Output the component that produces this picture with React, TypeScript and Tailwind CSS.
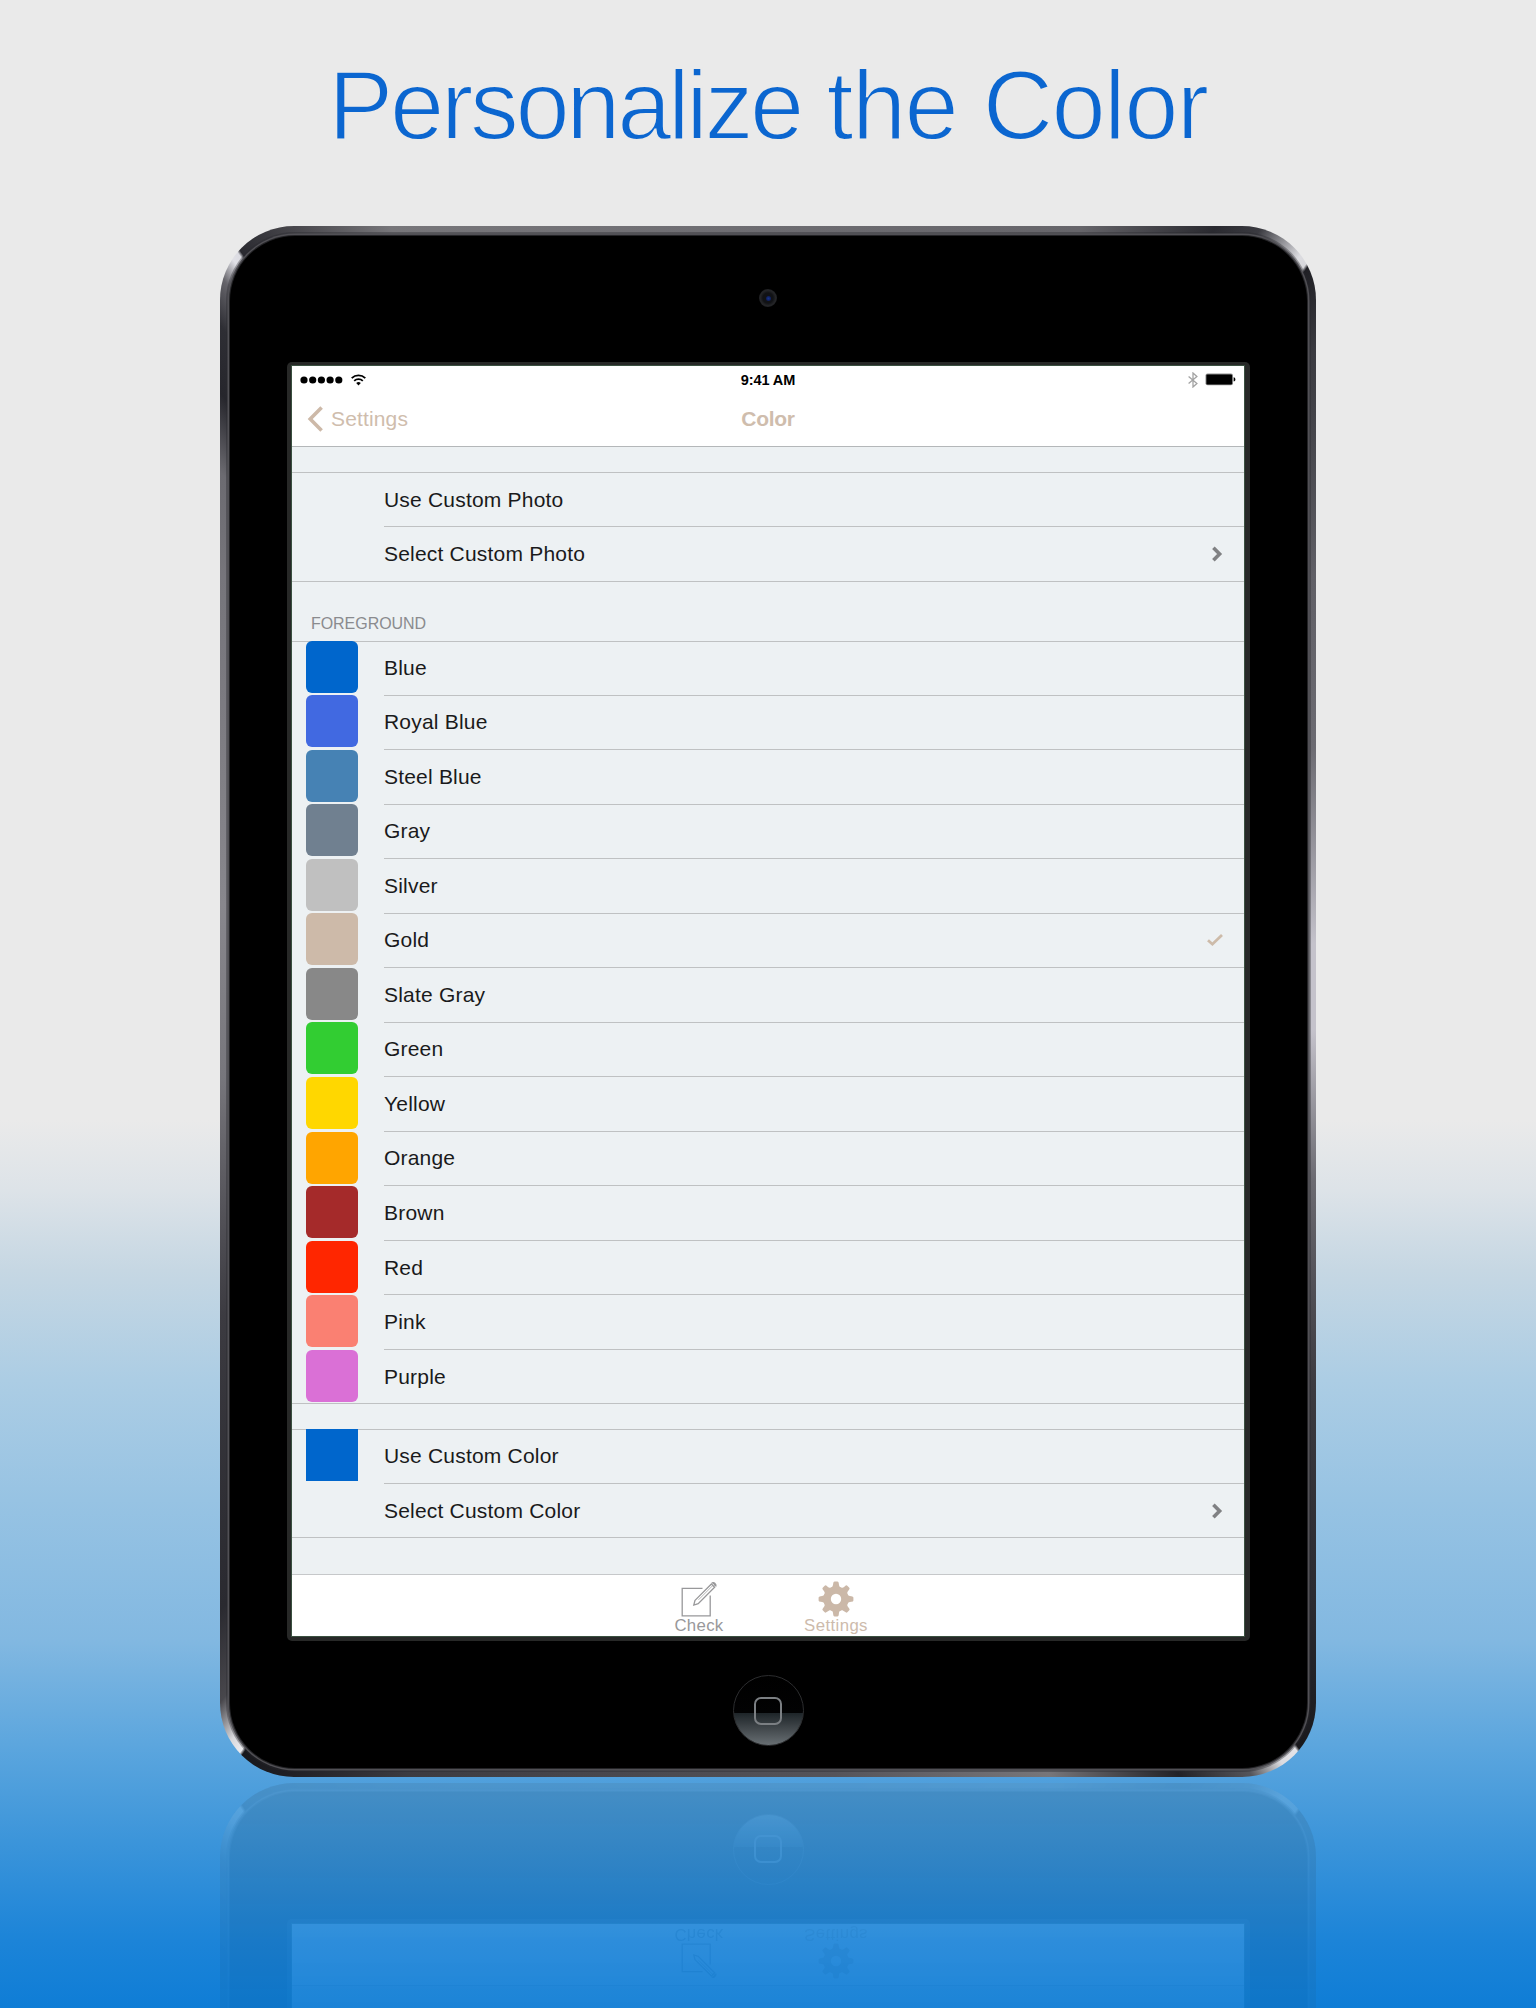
import type { ReactNode } from "react";

type Item = {
  label: string;
  swatch?: string;
  square?: boolean;
  checked?: boolean;
  chevron?: boolean;
};

const photoItems: Item[] = [
  { label: "Use Custom Photo" },
  { label: "Select Custom Photo", chevron: true },
];

const colorItems: Item[] = [
  { label: "Blue", swatch: "bg-[#0066cc]" },
  { label: "Royal Blue", swatch: "bg-[#4169e1]" },
  { label: "Steel Blue", swatch: "bg-[#4682b4]" },
  { label: "Gray", swatch: "bg-[#708090]" },
  { label: "Silver", swatch: "bg-[#c0c0c0]" },
  { label: "Gold", swatch: "bg-[#cdbaa9]", checked: true },
  { label: "Slate Gray", swatch: "bg-[#888888]" },
  { label: "Green", swatch: "bg-[#32cd32]" },
  { label: "Yellow", swatch: "bg-[#ffd700]" },
  { label: "Orange", swatch: "bg-[#ffa500]" },
  { label: "Brown", swatch: "bg-[#a52a2a]" },
  { label: "Red", swatch: "bg-[#ff2600]" },
  { label: "Pink", swatch: "bg-[#fa8072]" },
  { label: "Purple", swatch: "bg-[#da70d6]" },
];

const customItems: Item[] = [
  { label: "Use Custom Color", swatch: "bg-[#0066cc]", square: true },
  { label: "Select Custom Color", chevron: true },
];

function Row({ item, first }: { item: Item; first: boolean }) {
  return (
    <div className={first ? "flex h-[54.2px] border-t border-[#bfc1c2]" : "flex h-[54.53px]"}>
      <div className="w-[92px] shrink-0 pl-[14px]">
        {item.swatch && (
          <div
            className={`h-[52px] w-[52px] ${first ? "-mt-[0.5px]" : "mt-[0.7px]"} ${item.square ? "" : "rounded-[6px]"} ${item.swatch}`}
          />
        )}
      </div>
      <div
        className={
          first
            ? "flex flex-1 items-center justify-between pb-[1.2px] pr-[21px]"
            : "flex flex-1 items-center justify-between border-t border-[#bfc1c2] pb-[1.2px] pr-[21px]"
        }
      >
        <span className="text-[21px] leading-none tracking-[0.2px] text-[#1a1a1b]">{item.label}</span>
        {item.chevron && (
          <svg width="12" height="16" viewBox="0 0 12 16" className="mt-px" fill="none" stroke="#808183" strokeWidth="3.6">
            <path d="M2.4 1.8 8.6 8l-6.2 6.2" />
          </svg>
        )}
        {item.checked && (
          <svg width="16" height="14" viewBox="0 0 16 14" className="mt-px" fill="none" stroke="#cdbba9" strokeWidth="2.8">
            <path d="M1 7.2 5.4 11.2 15 2" />
          </svg>
        )}
      </div>
    </div>
  );
}

function Section({ items }: { items: Item[] }) {
  return (
    <div className="border-b border-[#bfc1c2]">
      {items.map((item, i) => (
        <Row key={item.label} item={item} first={i === 0} />
      ))}
    </div>
  );
}

function StatusBar() {
  return (
    <div className="grid h-[27px] grid-cols-3 items-center pl-[8px] pr-[8px] text-black">
      <div className="flex items-center gap-[8px]">
        <svg width="43" height="8" viewBox="0 0 43 8">
          <circle cx="4" cy="4" r="3.6" />
          <circle cx="12.7" cy="4" r="3.6" />
          <circle cx="21.4" cy="4" r="3.6" />
          <circle cx="30.1" cy="4" r="3.6" />
          <circle cx="38.8" cy="4" r="3.6" />
        </svg>
        <svg width="15" height="12" viewBox="0 0 15 12" fill="none" stroke="black" strokeWidth="1.8">
          <path d="M.7 4.1a9.8 9.8 0 0 1 13.6 0" />
          <path d="M3.2 6.8a6.3 6.3 0 0 1 8.6 0" />
          <path d="M5.2 9a3.4 3.4 0 0 1 4.6 0L7.5 11.4Z" fill="black" stroke="none" />
        </svg>
      </div>
      <div className="pt-px text-center text-[14.5px] font-bold leading-none tracking-[-0.1px]">9:41 AM</div>
      <div className="flex items-center justify-end gap-[7px]">
        <svg width="10" height="16" viewBox="0 0 10 16" fill="none" stroke="#a3a3a3" strokeWidth="1.3">
          <path d="M.6 4.6 8.9 11.5 5 15V1l3.9 3.5L.6 11.4" />
        </svg>
        <svg width="31" height="13" viewBox="0 0 31 13">
          <rect x=".5" y=".5" width="27.5" height="11.8" rx="2" fill="#8d8d8d" />
          <rect x="1.4" y="1.4" width="25.7" height="10" rx="1.2" />
          <path d="M28.6 4.2c2.4.6 2.4 3.8 0 4.4Z" />
        </svg>
      </div>
    </div>
  );
}

function NavBar() {
  return (
    <div className="grid h-[53px] grid-cols-3 items-center pb-px text-[#cfbdad]">
      <div className="flex items-center gap-[8px] pl-[15px]">
        <svg width="16" height="26" viewBox="0 0 16 26" fill="none" stroke="#cdb9a8" strokeWidth="3.6">
          <path d="M14.6 1.4 3.2 13l11.4 11.6" />
        </svg>
        <span className="pb-px text-[21px] leading-none tracking-[0.15px]">Settings</span>
      </div>
      <div className="pb-px text-center text-[21px] font-bold leading-none tracking-[-0.3px]">Color</div>
    </div>
  );
}

const gearTeeth = [0, 45, 90, 135, 180, 225, 270, 315];

function TabBar() {
  return (
    <div className="flex h-[62px] shrink-0 justify-center border-t border-[#c6c8ca] bg-white pr-px text-[16.8px] leading-none">
      <div className="flex w-[137px] flex-col items-center pt-[4.5px] text-[#98989a]">
        <svg width="38" height="38" viewBox="0 0 38 38" fill="none" stroke="#98989a" strokeWidth="1.3">
          <path d="M22.5 8.4H2.2v27.4h28V15.6" />
          <path d="M15 20.4 31.4 4l3.2 3.2-16.4 16.4-4.4 1.4Z" />
          <path d="M18.5 19.8 32.6 5.7" strokeWidth=".7" />
          <path d="M32.2 3.4c1-1.3 4 .9 3.2 3" strokeWidth="2.2" />
        </svg>
        <span className="tracking-[0.3px]">Check</span>
      </div>
      <div className="flex w-[137px] flex-col items-center pt-[4.5px] text-[#cdbbac]">
        <svg width="38" height="38" viewBox="0 0 38 38">
          <g fill="#cbb8a8">
            {gearTeeth.map((a) => (
              <path
                key={a}
                transform={`rotate(${a} 19 19)`}
                d="M13.6 8c2-.8 2.4-2 2.6-4.4Q16.3 1.6 17.6 1.6h2.8Q21.7 1.6 21.8 3.6c.2 2.4.6 3.6 2.6 4.4l-2 6h-6.8Z"
              />
            ))}
            <circle cx="19" cy="19" r="12.5" />
          </g>
          <circle cx="19" cy="19" r="5.2" fill="white" />
        </svg>
        <span className="tracking-[0.4px]">Settings</span>
      </div>
    </div>
  );
}

function Device({ children }: { children: ReactNode }) {
  return (
    <div className="h-[1551px] w-[1096px] shrink-0 rounded-[74px] bg-[conic-gradient(#6d6c71_0deg,#66656a_22deg,#2a2a30_30deg,#3a3a40_32.5deg,#dcdce0_35.5deg,#d8d8dc_36.1deg,#1f1f24_36.3deg,#3a3a40_40deg,#46464c_44deg,#605f66_52deg,#6c6b72_65deg,#c4c2cb_84deg,#c4c2cb_93deg,#6c6b72_108deg,#3c3b41_125deg,#2a2a30_138deg,#18181c_144.6deg,#e4e4e8_144.8deg,#dcdce0_146deg,#55555a_148deg,#222227_152deg,#77767a_160deg,#55545a_175deg,#46454b_195deg,#3c3b41_205deg,#1f1f24_212deg,#18181c_214.9deg,#ececf0_215.1deg,#d8d8dc_216deg,#48474c_218deg,#2a2a30_222deg,#3c3b41_240deg,#77767c_262deg,#88878d_280deg,#76757b_308deg,#6c6b71_314deg,#26262c_318deg,#2e2e34_321deg,#66656b_323deg,#e0e0e6_324.2deg,#dcdce2_324.7deg,#2a2a30_324.9deg,#4c4b50_329deg,#77767a_334deg,#6d6c71_360deg)] p-[9.5px]">
      <div className="flex h-full flex-col items-center rounded-[65px] bg-black shadow-[0_0_0_1px_#242427,0_0_0_2.5px_#515055,0_0_0_4px_#29292d60]">
        <div className="mt-[53.5px] flex h-[18px] w-[18px] items-center justify-center rounded-full bg-[radial-gradient(#111215_40%,#242528_60%,#141416)]">
          <div className="h-[5px] w-[5px] rounded-full bg-[radial-gradient(#17338c,#0a1440)]" />
        </div>
        <div className="mt-[55px] flex h-[1279px] w-[963px] flex-col items-center rounded-[5px] bg-[#272827] pt-[4px]">
          <div className="flex h-[1270px] w-[952px] flex-col overflow-hidden bg-[#edf1f3] shadow-[0_0_0_1px_#3a5040]">
            {children}
          </div>
        </div>
        <div className="mt-[34px] flex h-[71px] w-[71px] items-center justify-center rounded-full border border-[#2c2d2f] bg-[linear-gradient(#000_0%,#020203_53%,#1e2529_54%,#40464a_75%,#686f73_100%)]">
          <div className="h-[28px] w-[28px] rounded-[7px] border-[2.5px] border-[#7b7f83]" />
        </div>
      </div>
    </div>
  );
}

export default function App() {
  return (
    <div className="flex h-[2008px] w-[1536px] flex-col items-center overflow-hidden bg-[linear-gradient(#eaeaea_0px,#eaeaea_1120px,#dde3e8_1190px,#c6d7e3_1270px,#accde4_1380px,#97c3e3_1500px,#82b8e1_1640px,#5ca6de_1745px,#3c95da_1840px,#1c84d8_1940px,#0f7dd6_2008px)] font-['Liberation_Sans',Arial,sans-serif]">
      <h1 className="h-[226px] shrink-0 whitespace-nowrap pt-[50px] text-[97.5px] leading-[112px] tracking-[-1.6px] text-[#0b66d0] [-webkit-text-stroke:2px_#eaeaea]">
        <span className="tracking-[-3.35px]">Personalize</span> the Color
      </h1>

      <Device>
        <div className="h-[81px] shrink-0 border-b border-[#b4b7b9] bg-white">
          <StatusBar />
          <NavBar />
        </div>
        <div className="flex-1 pt-[25px]">
          <Section items={photoItems} />
          <div className="flex h-[58.8px] items-end pb-[9px] pl-[19px] text-[16px] leading-none tracking-[-0.05px] text-[#8a8b8e]">
            <span>FOREGROUND</span>
          </div>
          <Section items={colorItems} />
          <div className="h-[24.4px]" />
          <Section items={customItems} />
        </div>
        <TabBar />
      </Device>

      <div
        aria-hidden="true"
        className="mt-[6px] h-[225px] shrink-0 overflow-hidden [mask-image:linear-gradient(rgba(0,0,0,0.105),rgba(0,0,0,0.085)_60%,rgba(0,0,0,0.06))]"
      >
        <div className="-scale-y-100">
          <Device>
            <div className="flex-1" />
            <TabBar />
          </Device>
        </div>
      </div>
    </div>
  );
}
